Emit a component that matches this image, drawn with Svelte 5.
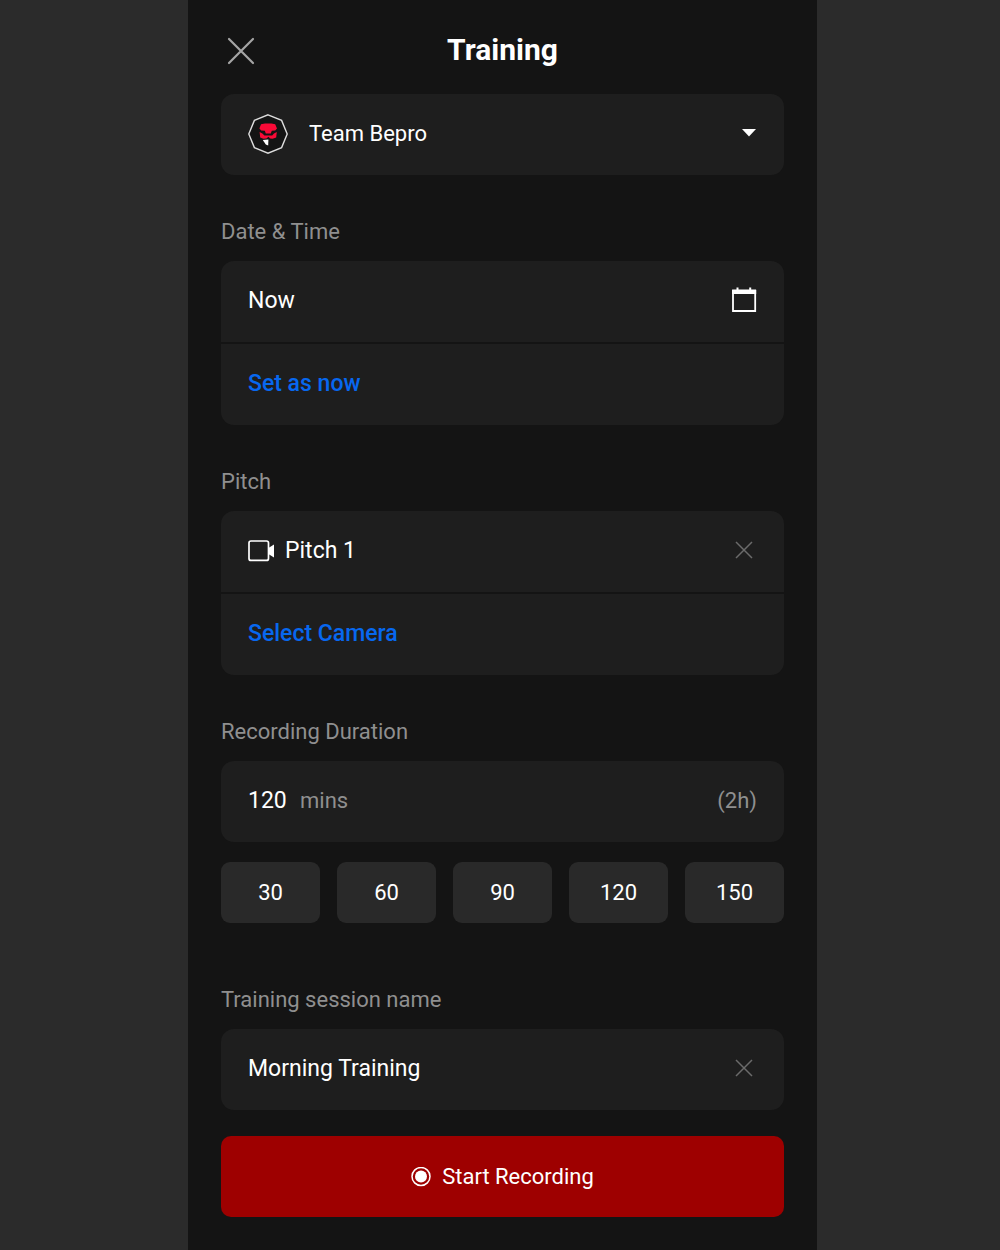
<script lang="ts">
  const presets = [30, 60, 90, 120, 150];

  let team = $state("Team Bepro");
  let startAt = $state("Now");
  let pitch = $state("Pitch 1");
  let duration = $state("120");
  let sessionName = $state("Morning Training");

  // "(2h)" for 120, "(1h 30m)" for 90
  let readable = $derived.by(() => {
    const total = Number(duration) || 0;
    const h = Math.floor(total / 60);
    const m = total % 60;
    const parts = [];
    if (h) parts.push(`${h}h`);
    if (m || !h) parts.push(`${m}m`);
    return `(${parts.join(" ")})`;
  });
</script>

{#snippet cross()}
  <svg class="cross" viewBox="0 0 18 18" aria-hidden="true">
    <path d="M1 1 17 17M17 1 1 17" />
  </svg>
{/snippet}

<div class="page">
  <main class="sheet">
    <header class="header">
      <button class="close" type="button" aria-label="Close">
        <svg viewBox="0 0 28 28" aria-hidden="true">
          <path d="M2 2 26 26M26 2 2 26" />
        </svg>
      </button>
      <h1>Training</h1>
    </header>

    <form onsubmit={(e) => e.preventDefault()}>
      <div class="card">
        <div class="row">
          <svg class="crest" viewBox="0 0 40 40" aria-hidden="true">
            <path class="ring" d="M20 .8 33.6 6.4 39.2 20 33.6 33.6 20 39.2 6.4 33.6 .8 20 6.4 6.4Z" />
            <path class="mask" d="M13 10.2 17 9.4H23.4L27.2 10.2 29 14.4 27.2 16.4 23.8 16.8 22.8 19.4H17.8L16.8 16.8 13.2 16.4 11.4 14.4Z" />
            <path class="mask" d="M11.6 18 14.4 19.6 16.4 21.4H24.2L26 19.6 28.8 18 28.2 23.4 24.6 24.8 22.2 24.4 20.4 22.8 18.4 24.4 15.4 24.8 12.2 23.4Z" />
            <path class="fang" d="M14.8 26 20.4 25.4 20.2 31.4 17.8 30.6Z" />
          </svg>
          <select bind:value={team} aria-label="Team">
            <option>Team Bepro</option>
          </select>
          <svg class="caret" viewBox="0 0 16 10" aria-hidden="true">
            <path d="M1 0H15L8 7.5Z" />
          </svg>
        </div>
      </div>

      <label class="label" for="start">Date &amp; Time</label>
      <div class="card">
        <div class="row">
          <input id="start" type="text" bind:value={startAt} />
          <button class="icon" type="button" aria-label="Open calendar">
            <svg class="calendar" viewBox="0 0 26 26" aria-hidden="true">
              <path class="line" d="M2 3.5H24.2V24H2Z" />
              <path class="solid" d="M1 3H5.5V.5H7.5V3H18.2V.5H20.2V3H25.2V7H1Z" />
            </svg>
          </button>
        </div>
        <button class="row link" type="button" onclick={() => (startAt = "Now")}>Set as now</button>
      </div>

      <div class="label">Pitch</div>
      <div class="card">
        <div class="row">
          <svg class="camera" viewBox="0 0 27 22" aria-hidden="true">
            <rect x="1" y="1" width="19.5" height="19.4" rx="2" />
            <path d="M20 8.2 26 4.4V17.6L20 13.8Z" />
          </svg>
          <span class="grow">{pitch}</span>
          <button class="icon" type="button" aria-label="Remove pitch" onclick={() => (pitch = "")}>
            {@render cross()}
          </button>
        </div>
        <button class="row link" type="button">Select Camera</button>
      </div>

      <label class="label" for="duration">Recording Duration</label>
      <div class="card">
        <div class="row">
          <input id="duration" class="number" type="text" inputmode="numeric" bind:value={duration} />
          <span class="unit grow">mins</span>
          <span class="unit">{readable}</span>
        </div>
      </div>
      <div class="presets">
        {#each presets as p}
          <button type="button" onclick={() => (duration = String(p))}>{p}</button>
        {/each}
      </div>

      <label class="label session" for="session">Training session name</label>
      <div class="card">
        <div class="row">
          <input id="session" type="text" bind:value={sessionName} />
          <button class="icon" type="button" aria-label="Clear name" onclick={() => (sessionName = "")}>
            {@render cross()}
          </button>
        </div>
      </div>

      <button class="record" type="submit">
        <svg viewBox="0 0 20 20" aria-hidden="true">
          <circle class="outer" cx="10" cy="9.5" r="9" />
          <circle class="inner" cx="10" cy="9.5" r="6" />
        </svg>
        Start Recording
      </button>
    </form>
  </main>
</div>

<style>
  :global(body) {
    background: #2b2b2b;
  }

  .page {
    display: grid;
    grid-template-columns: 188fr 629fr 183fr;
    min-height: 100vh;
    color: #fff;
    font-family: Roboto, "Liberation Sans", sans-serif;
    font-size: 23px;
    line-height: 28px;
  }

  .sheet {
    grid-column: 2;
    padding: 0 33px 33px;
    background: #141414;
  }

  .header {
    display: grid;
    grid-template-columns: 40px 1fr 40px;
    align-items: center;
    height: 94px;
    padding-bottom: 6px;
    box-sizing: border-box;
  }

  h1 {
    margin: 0;
    padding-top: 12px;
    font-size: 30px;
    font-weight: 700;
    line-height: 36px;
    text-align: center;
  }

  svg {
    display: block;
    flex: none;
  }

  button, input, select {
    margin: 0;
    padding: 0;
    border: 0;
    background: none;
    color: inherit;
    font: inherit;
  }

  button { cursor: pointer; }

  .close {
    display: flex;
    justify-content: center;
    padding-top: 14px;
  }

  .close svg {
    width: 28px;
    height: 28px;
    fill: none;
    stroke: #a5a5a5;
    stroke-width: 2.2;
    stroke-linecap: round;
  }

  .card {
    overflow: hidden;
    border-radius: 13px;
    background: #1e1e1e;
  }

  .row {
    display: flex;
    align-items: center;
    width: 100%;
    height: 81px;
    padding: 0 27px 1px;
    box-sizing: border-box;
  }

  .row + .row {
    height: 83px;
    border-top: 2px solid #141414;
  }

  .row input {
    flex: 1;
    min-width: 0;
    outline: none;
  }

  .grow { flex: 1; }

  .link {
    color: #0768f0;
    font-weight: 500;
    text-align: left;
  }

  .crest {
    width: 40px;
    height: 40px;
    margin-right: 21px;
  }

  .crest .ring {
    fill: #141414;
    stroke: #dcdcdc;
    stroke-width: 1.4;
  }

  .crest .mask { fill: #fa0a37; }
  .crest .fang { fill: #fff; }

  select {
    flex: 1;
    appearance: none;
    font-size: 22px;
    outline: none;
  }

  option { background: #1e1e1e; }

  .caret {
    width: 16px;
    height: 10px;
    fill: #fff;
    pointer-events: none;
  }

  .label {
    display: block;
    padding: 44px 0 16px;
    color: #8f8f8f;
    font-size: 22px;
    line-height: 26px;
  }

  .label.session { padding-top: 64px; }

  .icon {
    display: flex;
    justify-content: center;
    width: 26px;
    padding-bottom: 3px;
  }

  .calendar {
    width: 26px;
    height: 26px;
  }

  .calendar .line {
    fill: none;
    stroke: #fff;
    stroke-width: 1.8;
  }

  .calendar .solid { fill: #fff; }

  .camera {
    width: 27px;
    height: 22px;
    margin-right: 10px;
  }

  .camera rect {
    fill: none;
    stroke: #fff;
    stroke-width: 1.7;
  }

  .camera path { fill: #fff; }

  .cross {
    width: 18px;
    height: 18px;
    fill: none;
    stroke: #6b6b6b;
    stroke-width: 1.5;
  }

  .row .number {
    flex: none;
    width: 40px;
    margin-right: 12px;
  }

  .unit {
    color: #8f8f8f;
    font-size: 22px;
  }

  .presets {
    display: grid;
    grid-template-columns: repeat(5, 1fr);
    gap: 17px;
    margin-top: 20px;
  }

  .presets button {
    height: 61px;
    border-radius: 9px;
    background: #292929;
    font-size: 22px;
  }

  .record {
    display: flex;
    align-items: center;
    justify-content: center;
    gap: 11px;
    width: 100%;
    height: 81px;
    margin-top: 26px;
    border-radius: 10px;
    background: #9e0000;
    font-size: 22px;
  }

  .record svg {
    width: 20px;
    height: 20px;
  }

  .record .outer {
    fill: none;
    stroke: #fff;
    stroke-width: 1.5;
  }

  .record .inner { fill: #fff; }
</style>
